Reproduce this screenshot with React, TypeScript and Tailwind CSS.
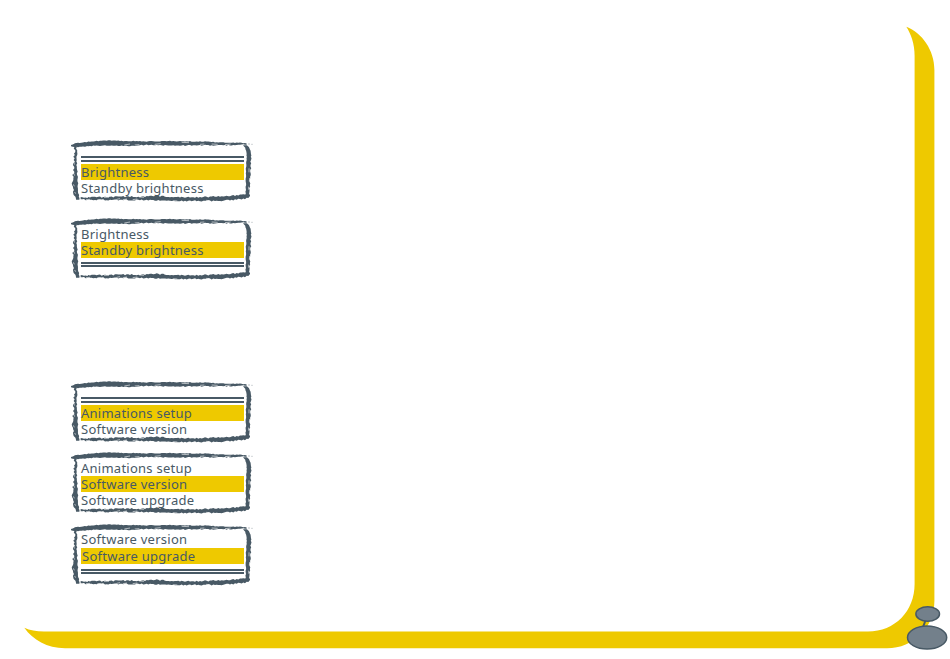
type Row = { kind: 'text' | 'active'; label: string; className: string } | { kind: 'rule'; className: string };

interface Menu {
  className: string;
  rows: Row[];
}

const menus: Menu[] = [
  {
    className: 'mt-[140px]',
    rows: [
      { kind: 'rule', className: 'mt-4 h-[6px]' },
      { kind: 'active', label: 'Brightness', className: 'mt-[2px]' },
      { kind: 'text', label: 'Standby brightness', className: '' },
    ],
  },
  {
    className: 'mt-4',
    rows: [
      { kind: 'text', label: 'Brightness', className: 'mt-2' },
      { kind: 'active', label: 'Standby brightness', className: '' },
      { kind: 'rule', className: 'mt-1 h-[5px]' },
    ],
  },
  {
    className: 'mt-[101px]',
    rows: [
      { kind: 'rule', className: 'mt-4 h-[6px]' },
      { kind: 'active', label: 'Animations setup', className: 'mt-[2px]' },
      { kind: 'text', label: 'Software version', className: '' },
    ],
  },
  {
    className: 'mt-[9px]',
    rows: [
      { kind: 'text', label: 'Animations setup', className: 'mt-2' },
      { kind: 'active', label: 'Software version', className: '' },
      { kind: 'text', label: 'Software upgrade', className: '' },
    ],
  },
  {
    className: 'mt-[10px]',
    rows: [
      { kind: 'text', label: 'Software version', className: 'mt-[7px] mb-px' },
      { kind: 'active', label: 'Software upgrade', className: 'pl-px' },
      { kind: 'rule', className: 'mt-[5px] h-[5px]' },
    ],
  },
];

// position along the stroke, then its two edges
type Sample = [number, number, number];

function brush(samples: Sample[], vertical: boolean, seed: number, rough: [number, number]) {
  let state = seed;
  const random = () => {
    state = (state * 16807) % 2147483647;
    return state / 2147483647 - 0.5;
  };
  const near: string[] = [];
  const far: string[] = [];
  const point = (a: number, b: number) => (vertical ? `${b.toFixed(1)} ${a.toFixed(1)}` : `${a.toFixed(1)} ${b.toFixed(1)}`);

  for (let i = 0; i < samples.length - 1; i++) {
    const [a, a1, a2] = samples[i];
    const [b, b1, b2] = samples[i + 1];
    for (let pos = a; pos < b; pos += 5) {
      const t = (pos - a) / (b - a);
      near.push(point(pos, a1 + (b1 - a1) * t + random() * rough[0]));
      far.unshift(point(pos, a2 + (b2 - a2) * t + random() * rough[1]));
    }
  }
  return `M${near.join('L')}L${far.join('L')}Z`;
}

const strokes = [
  brush([[33, 46, 49], [44, 40, 51], [80, 36, 49], [110, 33, 47], [150, 31, 46], [190, 33, 48], [260, 34, 45], [340, 33, 47], [440, 35, 46], [500, 38, 46], [540, 38, 44], [562, 40, 43]], false, 71, [2, 3]),
  brush([[46, 44, 49], [75, 43, 51], [110, 41, 51], [140, 39, 52], [165, 38, 54], [190, 41, 56], [204, 46, 59], [210, 52, 57]], true, 19, [6, 4]),
  brush([[46, 550, 560], [53, 555, 568], [62, 559, 573], [80, 560, 573], [110, 558, 573], [145, 558, 571], [185, 557, 568], [204, 556, 564]], true, 43, [2, 4]),
  brush([[62, 203, 207], [85, 202, 210], [150, 201, 210], [180, 200, 210], [250, 200, 210], [280, 197, 211], [330, 200, 213], [390, 202, 213], [440, 201, 213], [485, 198, 212], [530, 196, 209], [565, 192, 204], [573, 194, 197]], false, 97, [4, 4]),
];

function BrushFrame() {
  return (
    <svg className="absolute inset-0 h-[62px] w-[185px]" viewBox="30 30 555 186" aria-hidden="true">
      <g fill="#485965">
        {strokes.map((d) => (
          <path key={d} d={d} />
        ))}
      </g>
      <path d="M564 42h6M574 43h4" stroke="#9ba4aa" strokeWidth="2" />
      <path
        d="M193 45l17-3M224 45l14-1M284 43l18-2M365 37l22 1M420 43l13-1M455 42l18 1M495 44l17-2M78 209l12-1M112 209l17 0M132 202l15 0M170 208l10-2M188 209l13-2M218 209l14-2M238 201l14 1M340 212l12 1M438 211l11 1M41 92l2 12M41 130l3 7M40 163l3 6M44 186l3 5M567 115l0 12M569 144l-1 10M566 170l0 9"
        stroke="#fff"
        strokeWidth="2.5"
        strokeOpacity=".7"
        fill="none"
      />
    </svg>
  );
}

function MenuRow({ row }: { row: Row }) {
  if (row.kind === 'rule') {
    return <div className={`border-y-2 border-[#485965] ${row.className}`} />;
  }
  return (
    <div
      className={`h-4 whitespace-nowrap text-[13px] leading-4 tracking-[0.25px] text-[#485965] ${row.className} ${
        row.kind === 'active' ? 'bg-[#eec900]' : ''
      }`}
    >
      {row.label}
    </div>
  );
}

function MenuPanel({ menu }: { menu: Menu }) {
  return (
    <div className={`relative flex h-[62px] w-[185px] flex-col ${menu.className}`}>
      <BrushFrame />
      <div className="relative ml-[11px] flex w-[163px] flex-col">
        {menu.rows.map((row, i) => (
          <MenuRow key={i} row={row} />
        ))}
      </div>
    </div>
  );
}

function PageSwoosh() {
  return (
    <svg className="absolute inset-0 h-[659px] w-[950px]" viewBox="0 0 950 659" aria-hidden="true">
      <path
        d="M906.3 26.8C922 33 934.4 50 934.4 70V601C934.4 627 914 648.3 887 648.3H65C47 648.3 33 640 24.3 627.8C30 630.5 36 631.5 44 631.5H868C895 631.5 914.6 611 914.6 584V56C914.6 44 911 34 906.3 26.8Z"
        fill="#eec900"
      />
      <g fill="#73808b" stroke="#485965" strokeWidth="1.5">
        <path d="M925.5 620.5L923 627" strokeWidth="2" />
        <ellipse cx="927.7" cy="614" rx="11.8" ry="7.2" />
        <ellipse cx="927.1" cy="637.5" rx="19.6" ry="11.6" />
      </g>
    </svg>
  );
}

export default function App() {
  return (
    <main className="relative flex h-[659px] w-[950px] flex-col overflow-hidden bg-white pl-[70px] font-['Noto_Sans',sans-serif]">
      <PageSwoosh />
      {menus.map((menu, i) => (
        <MenuPanel key={i} menu={menu} />
      ))}
    </main>
  );
}
